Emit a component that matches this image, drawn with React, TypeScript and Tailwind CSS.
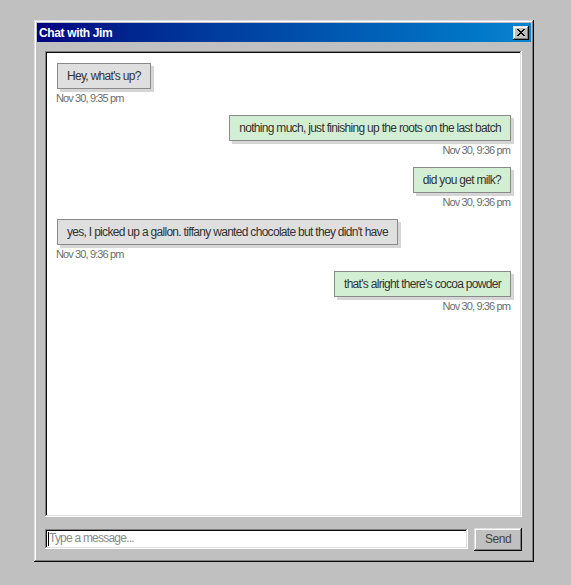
import React from "react"

type Msg = {
  id: number
  text: string
  time: string
  mine: boolean
}

const MESSAGES: Msg[] = [
  { id: 1, text: "Hey, what's up?", time: "Nov 30, 9:35 pm", mine: false },
  { id: 2, text: "nothing much, just finishing up the roots on the last batch", time: "Nov 30, 9:36 pm", mine: true },
  { id: 3, text: "did you get milk?", time: "Nov 30, 9:36 pm", mine: true },
  { id: 4, text: "yes, I picked up a gallon. tiffany wanted chocolate but they didn't have", time: "Nov 30, 9:36 pm", mine: false },
  { id: 5, text: "that's alright there's cocoa powder", time: "Nov 30, 9:36 pm", mine: true },
]

const outset =
  "shadow-[inset_-1px_-1px_#0a0a0a,inset_1px_1px_#dfdfdf,inset_-2px_-2px_#808080,inset_2px_2px_#ffffff]"
const inset =
  "shadow-[inset_-1px_-1px_#ffffff,inset_1px_1px_#808080,inset_-2px_-2px_#dfdfdf,inset_2px_2px_#0a0a0a]"

const Bubble = ({ m }: { m: Msg }) => (
  <div className={`flex flex-col ${m.mine ? "items-end" : "items-start"}`}>
    <div
      className={`border border-[#8a8a8a] px-[9px] py-[5px] text-[12px] leading-[14px] tracking-[-0.058em] text-[#333333] shadow-[3px_3px_0_#d6d6d6] ${
        m.mine ? "bg-[#d3efd3]" : "bg-[#dfdfdf]"
      }`}
    >
      {m.text}
    </div>
    <div
      className={`mt-[2px] text-[11px] leading-[14px] tracking-[-0.08em] text-[#6e6e6e] ${
        m.mine ? "mr-[1px]" : "-ml-[1px]"
      }`}
    >
      {m.time}
    </div>
  </div>
)

export default function App() {
  return (
    <div
      className="h-[585px] w-[571px] bg-[#c0c0c0] pl-[34px] pt-[20px]"
      style={{ fontFamily: '"Liberation Sans", Arial, sans-serif' }}
    >
      {/* Ventana */}
      <div className={`flex h-[542px] w-[500px] flex-col bg-[#c0c0c0] p-[3px] ${outset}`}>
        {/* Barra de título */}
        <div className="flex h-[19px] items-center justify-between bg-gradient-to-r from-[#000080] to-[#1084d0] pl-[2px] pr-[2px]">
          <span className="text-[12px] font-bold tracking-[-0.03em] text-white">Chat with Jim</span>
          <button
            className={`flex h-[14px] w-[16px] items-center justify-center bg-[#c0c0c0] ${outset}`}
          >
            <svg width="8" height="7" viewBox="0 0 8 7">
              <path d="M0 0h2v1h1v1h2V1h1V0h2v1H7v1H6v1H5v1h1v1h1v1h1v1H6V6H5V5H3v1H2v1H0V6h1V5h1V4h1V3H2V2H1V1H0z" fill="#000" />
            </svg>
          </button>
        </div>

        {/* Contenido */}
        <div className="flex flex-1 flex-col pl-[8px] pr-[9px] pt-[9px] pb-[8px]">
          <div className={`h-[466px] bg-white p-[2px] ${inset}`}>
            <div className="flex flex-col gap-[10px] pl-[10px] pr-[9px] pt-[10px]">
              {MESSAGES.map((m) => (
                <Bubble key={m.id} m={m} />
              ))}
            </div>
          </div>

          {/* Entrada */}
          <div className="mt-[11px] flex h-[23px] items-start gap-[6px]">
            <div className={`relative mt-[1px] flex h-[20px] w-[424px] items-center bg-white ${inset}`}>
              <input
                className="-mt-[2px] block h-[16px] w-full bg-transparent pl-[4px] text-[12px] leading-[16px] tracking-[-0.065em] text-[#333] outline-none placeholder:text-[#8a8a8a]"
                placeholder="Type a message..."
              />
              <span className="absolute left-[3px] top-[3px] h-[14px] w-[1px] bg-black" />
            </div>
            <button
              className={`h-[23px] w-[48px] bg-[#c0c0c0] pb-[1px] text-[12px] tracking-[-0.04em] text-[#444] ${outset}`}
            >
              Send
            </button>
          </div>
        </div>
      </div>
    </div>
  )
}
